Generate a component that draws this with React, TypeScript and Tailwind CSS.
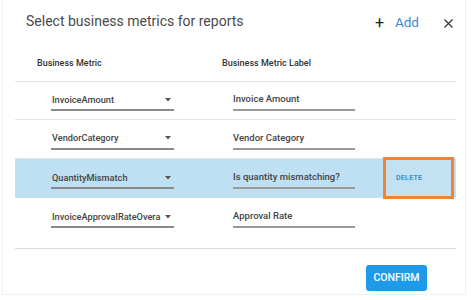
import React from "react";

const rows = [
  { metric: "InvoiceAmount", label: "Invoice Amount" },
  { metric: "VendorCategory", label: "Vendor Category" },
  { metric: "QuantityMismatch", label: "Is quantity mismatching?", selected: true },
  { metric: "InvoiceApprovalRateOvera", label: "Approval Rate" },
];

function Caret() {
  return (
    <svg width="6" height="4" viewBox="0 0 6 4" className="shrink-0">
      <path d="M0 0 L6 0 L3 3.5 Z" fill="#555" />
    </svg>
  );
}

export default function App() {
  return (
    <div className="w-[471px] h-[300px] bg-white overflow-hidden" style={{ fontFamily: "Roboto, 'Liberation Sans', sans-serif" }}>
      <div className="ml-[2px] w-[464px] h-[295px] border-l border-r border-b border-[#f0f0f0] flex flex-col">
        <div className="flex items-center h-[43px] pl-[23px] pr-[12px]">
          <div className="text-[14px] text-[#4a4a4a] flex-1">Select business metrics for reports</div>
          <div className="flex items-center text-[13.5px] mr-[25px] mt-[2px]">
            <span className="text-[#222] text-[16px] leading-none mr-[11px]">+</span>
            <span className="text-[#3b8ad0]">Add</span>
          </div>
          <svg width="9" height="9" viewBox="0 0 9 9" className="mt-[3px]">
            <path d="M0.5 0.5 L8.5 8.5 M8.5 0.5 L0.5 8.5" stroke="#333" strokeWidth="1.2" />
          </svg>
        </div>
        <div className="flex items-center h-[38px] pt-[4px] text-[9px] font-medium text-[#333]">
          <div className="pl-[34px] w-[219px]">Business Metric</div>
          <div>Business Metric Label</div>
        </div>
        <div className="mx-[12px] w-[441px] flex flex-col">
          {rows.map((r, i) => (
            <div
              key={i}
              className={`relative flex items-center h-[39px] ${r.selected ? "bg-[#bfe0f3]" : i === 3 ? "" : "border-b border-[#e4e4e4]"} ${i === 0 ? "border-t border-[#e4e4e4]" : ""}`}
            >
              <div className="ml-[36px] w-[123px] flex flex-col mt-[1px]">
                <div className="flex items-center justify-between pl-[1px] pr-[3px] h-[17px] gap-[4px]">
                  <span className="text-[9.2px] font-medium text-[#444] whitespace-nowrap">{r.metric}</span>
                  <Caret />
                </div>
                <div className="h-[2px] bg-[#8a8a8a] mt-[1px]" />
              </div>
              <div className="ml-[59px] w-[122px] flex flex-col mt-[1px]">
                <div className="flex items-center h-[17px]">
                  <span className="text-[9.5px] font-medium text-[#444] whitespace-nowrap">{r.label}</span>
                </div>
                <div className="h-[2px] bg-[#9a9a9a] mt-[1px]" />
              </div>
              {r.selected && (
                <div className="absolute left-[368px] top-[-2px] w-[71px] h-[42px] border-[3px] border-[#ef8533] bg-[#c2e1f3] flex items-center pl-[10px]">
                  <span className="text-[7px] font-bold text-[#3a8fd0] tracking-[0.3px]">DELETE</span>
                </div>
              )}
            </div>
          ))}
          <div className="h-[12px] border-b border-[#dcdcdc]" />
        </div>
        <div className="flex justify-end pr-[38px] mt-[16px]">
          <div className="w-[61px] h-[26px] rounded-[3px] bg-[#1d9bea] flex items-center justify-center text-white text-[10.5px] font-medium">
            CONFIRM
          </div>
        </div>
      </div>
    </div>
  );
}
